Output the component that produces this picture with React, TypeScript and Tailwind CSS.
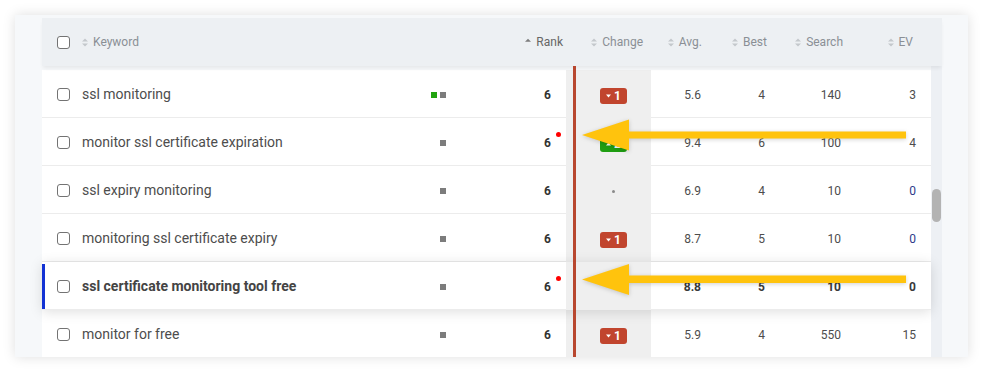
import clsx from 'clsx'

type Change = { kind: 'down' | 'up' | 'dot' | 'none'; value?: number }

type Row = {
  keyword: string
  squares: ('green' | 'gray')[]
  rank: number
  dot?: boolean
  change: Change
  avg: string
  best: string
  search: string
  ev: string
  evLink?: boolean
  active?: boolean
}

const rows: Row[] = [
  { keyword: 'ssl monitoring', squares: ['green', 'gray'], rank: 6, change: { kind: 'down', value: 1 }, avg: '5.6', best: '4', search: '140', ev: '3' },
  { keyword: 'monitor ssl certificate expiration', squares: ['gray'], rank: 6, dot: true, change: { kind: 'up', value: 2 }, avg: '9.4', best: '6', search: '100', ev: '4' },
  { keyword: 'ssl expiry monitoring', squares: ['gray'], rank: 6, change: { kind: 'dot' }, avg: '6.9', best: '4', search: '10', ev: '0', evLink: true },
  { keyword: 'monitoring ssl certificate expiry', squares: ['gray'], rank: 6, change: { kind: 'down', value: 1 }, avg: '8.7', best: '5', search: '10', ev: '0', evLink: true },
  { keyword: 'ssl certificate monitoring tool free', squares: ['gray'], rank: 6, dot: true, change: { kind: 'none' }, avg: '8.8', best: '5', search: '10', ev: '0', active: true },
  { keyword: 'monitor for free', squares: ['gray'], rank: 6, change: { kind: 'down', value: 1 }, avg: '5.9', best: '4', search: '550', ev: '15' },
]

function SortIcon({ active }: { active?: boolean }) {
  if (active) {
    return (
      <svg width="6" height="9" viewBox="0 0 6 9" className="shrink-0">
        <path d="M0 3.8L3 0.8L6 3.8Z" fill="#7d7d7d" />
      </svg>
    )
  }
  return (
    <svg width="6" height="9" viewBox="0 0 6 9" className="shrink-0">
      <path d="M0 3.6L3 0.6L6 3.6ZM0 5.4L3 8.4L6 5.4Z" fill="#c4c8cc" />
    </svg>
  )
}

function Checkbox() {
  return <div className="w-[13px] h-[13px] rounded-[3px] border border-[#737373] bg-white" />
}

function Badge({ change }: { change: Change }) {
  if (change.kind === 'dot') return <div className="w-[3px] h-[3px] rounded-full bg-[#8a8a8a]" />
  if (change.kind === 'none') return null
  const up = change.kind === 'up'
  return (
    <div
      className={clsx(
        'w-[27px] h-[16px] mt-[1px] rounded-[3px] flex items-center justify-center gap-[3px] text-white text-[12px] font-bold leading-none',
        up ? 'bg-[#1f9e12]' : 'bg-[#c1452e]',
      )}
    >
      <svg width="5" height="4" viewBox="0 0 5 4">
        <path d={up ? 'M0 3.5L2.5 0.5L5 3.5Z' : 'M0 0.5L2.5 3.5L5 0.5Z'} fill="#fff" />
      </svg>
      <span>{change.value}</span>
    </div>
  )
}

function TableRow({ row, first }: { row: Row; first?: boolean }) {
  const bold = row.active
  return (
    <div
      className={clsx(
        'flex shrink-0',
        first ? 'h-[52px] pt-[4px]' : 'h-[48px]',
        bold && 'relative z-10 shadow-[0_2px_12px_rgba(0,0,0,0.13)]',
      )}
    >
      <div
        className={clsx(
          'flex w-[524px] items-center pt-[2px] bg-white border-b border-[#ececec]',
          bold ? 'font-bold text-[#444]' : 'text-[#4d4d4d]',
        )}
      >
        <div className={clsx('w-[36px] h-full flex items-center', bold ? 'border-l-[3px] border-[#1232d4] pl-[12px]' : 'pl-[15px]')}>
          <Checkbox />
        </div>
        <div className="w-[342px] pl-[4px] text-[14px] whitespace-nowrap">{row.keyword}</div>
        <div className="w-[40px] flex justify-end gap-[3px] pr-[14px]">
          {row.squares.map((s, i) => (
            <div key={i} className={clsx('w-[6px] h-[6px]', s === 'green' ? 'bg-[#22a30f]' : 'bg-[#7c7c7c]')} />
          ))}
        </div>
        <div className="w-[106px] flex justify-end pr-[15px] text-[12px] font-bold text-[#333]">
          <span className="relative">
            {row.rank}
            {row.dot && <span className="absolute left-[calc(100%+5px)] top-[-2px] w-[5px] h-[5px] rounded-full bg-[#ff0000]" />}
          </span>
        </div>
      </div>
      <div className="w-[85px] bg-[#efefef] flex items-center justify-center pl-[10px] pt-[2px]">
        <Badge change={row.change} />
      </div>
      <div
        className={clsx(
          'flex w-[280px] items-center pt-[2px] bg-white border-b border-[#ececec] text-[12px]',
          bold ? 'font-bold text-[#3a3a3a]' : 'text-[#4d4d4d]',
        )}
      >
        <div className="w-[59px] text-right pr-[9px]">{row.avg}</div>
        <div className="w-[65px] text-right pr-[10px]">{row.best}</div>
        <div className="w-[75px] text-right pr-[9px]">{row.search}</div>
        <div className={clsx('w-[81px] text-right pr-[15px]', row.evLink && 'text-[#2e3a8a]')}>{row.ev}</div>
      </div>
    </div>
  )
}

export default function App() {
  return (
    <div className="relative w-[983px] h-[373px] bg-white p-[15px] font-['Roboto','Liberation_Sans',sans-serif]">
      <div className="w-[953px] h-[342px] bg-[#f6f8fa] overflow-hidden pl-[27px] pt-[3px] shadow-[0_0_12px_rgba(0,0,0,0.13)]">
        <div className="w-[900px] flex flex-col">
          {/* Header */}
          <div className="relative z-20 flex h-[48px] items-center bg-[#edf0f3] text-[12px] text-[#8a8f95] shadow-[0_3px_4px_-1px_rgba(0,0,0,0.07)]">
            <div className="w-[36px] pl-[15px] flex items-center">
              <Checkbox />
            </div>
            <div className="w-[342px] pl-[4px] flex items-center gap-[5px]">
              <SortIcon />
              <span>Keyword</span>
            </div>
            <div className="w-[40px]" />
            <div className="w-[106px] pr-[3px] flex items-center justify-end gap-[5px]">
              <SortIcon active />
              <span className="text-[#666]">Rank</span>
            </div>
            <div className="w-[85px] pr-[8px] flex items-center justify-end gap-[5px]">
              <SortIcon />
              <span>Change</span>
            </div>
            <div className="w-[59px] pr-[8px] flex items-center justify-end gap-[5px]">
              <SortIcon />
              <span>Avg.</span>
            </div>
            <div className="w-[65px] pr-[8px] flex items-center justify-end gap-[5px]">
              <SortIcon />
              <span>Best</span>
            </div>
            <div className="w-[75px] pr-[7px] flex items-center justify-end gap-[5px]">
              <SortIcon />
              <span>Search</span>
            </div>
            <div className="w-[81px] pr-[18px] flex items-center justify-end gap-[5px]">
              <SortIcon />
              <span>EV</span>
            </div>
            <div className="w-[11px]" />
          </div>

          {/* Body */}
          <div className="flex">
            <div className="relative w-[889px] flex flex-col">
              {rows.map((r, i) => (
                <TableRow key={i} row={r} first={i === 0} />
              ))}
              {/* annotation line */}
              <div className="absolute left-[531px] top-0 bottom-0 w-[3px] bg-[#b8472f] z-20" />
            </div>
            <div className="w-[11px] bg-[#edf0f4] pl-[1px]">
              <div className="mt-[123px] w-[9px] h-[33px] rounded-full bg-[#b3b3b3]" />
            </div>
          </div>
        </div>
      </div>

      {/* annotation arrows */}
      <svg
        width="983"
        height="373"
        viewBox="0 0 983 373"
        className="absolute inset-0 z-30 pointer-events-none drop-shadow-[0_1px_2px_rgba(0,0,0,0.18)]"
      >
        <polygon points="582,135 629,119.5 629,131.5 906,131.5 906,138.5 629,138.5 629,150.5" fill="#ffc30d" />
        <polygon points="582,279.5 629,264 629,275.5 906,275.5 906,283 629,283 629,295" fill="#ffc30d" />
      </svg>
    </div>
  )
}
